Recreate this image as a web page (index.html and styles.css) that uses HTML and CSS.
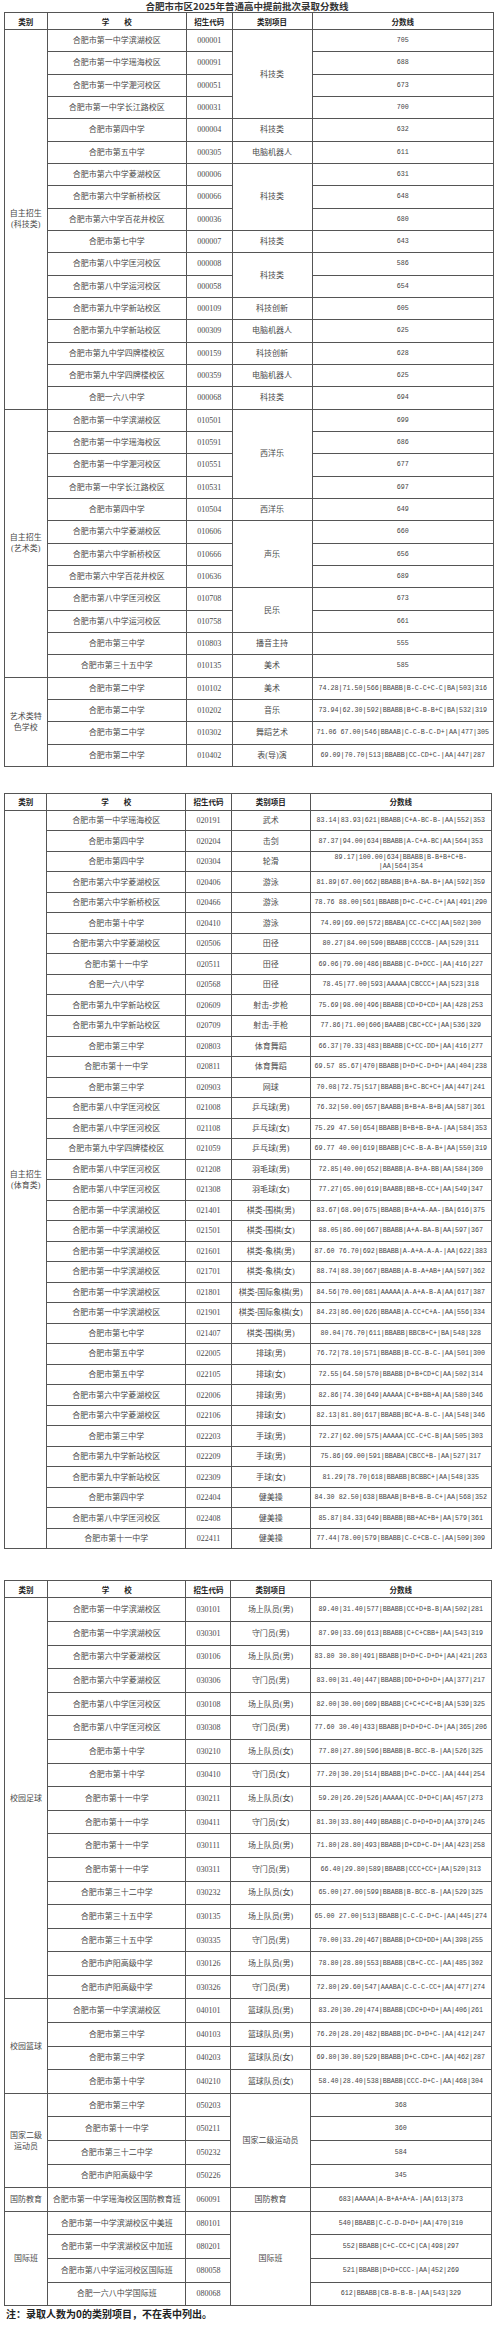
FILE: index.html
```html
<!DOCTYPE html>
<html lang="zh">
<head>
<meta charset="utf-8">
<title>合肥市市区2025年普通高中提前批次录取分数线</title>
<link rel="stylesheet" href="styles.css">
</head>
<body>
<h1 class="title">合肥市市区2025年普通高中提前批次录取分数线</h1>

<table class="t t1">
<colgroup><col class="c1"><col class="c2"><col class="c3"><col class="c4"><col class="c5"></colgroup>
<thead><tr class="hd"><th>类别</th><th>学　　校</th><th>招生代码</th><th>类别项目</th><th>分数线</th></tr></thead>
<tbody>
<tr><td class="cat" rowspan="17">自主招生<br>(科技类)</td><td>合肥市第一中学滨湖校区</td><td>000001</td><td rowspan="4">科技类</td><td>705</td></tr>
<tr><td>合肥市第一中学瑶海校区</td><td>000091</td><td>688</td></tr>
<tr><td>合肥市第一中学淝河校区</td><td>000051</td><td>673</td></tr>
<tr><td>合肥市第一中学长江路校区</td><td>000031</td><td>700</td></tr>
<tr><td>合肥市第四中学</td><td>000004</td><td>科技类</td><td>632</td></tr>
<tr><td>合肥市第五中学</td><td>000305</td><td>电脑机器人</td><td>611</td></tr>
<tr><td>合肥市第六中学菱湖校区</td><td>000006</td><td rowspan="3">科技类</td><td>631</td></tr>
<tr><td>合肥市第六中学新桥校区</td><td>000066</td><td>648</td></tr>
<tr><td>合肥市第六中学百花井校区</td><td>000036</td><td>680</td></tr>
<tr><td>合肥市第七中学</td><td>000007</td><td>科技类</td><td>643</td></tr>
<tr><td>合肥市第八中学匡河校区</td><td>000008</td><td rowspan="2">科技类</td><td>586</td></tr>
<tr><td>合肥市第八中学运河校区</td><td>000058</td><td>654</td></tr>
<tr><td>合肥市第九中学新站校区</td><td>000109</td><td>科技创新</td><td>605</td></tr>
<tr><td>合肥市第九中学新站校区</td><td>000309</td><td>电脑机器人</td><td>625</td></tr>
<tr><td>合肥市第九中学四牌楼校区</td><td>000159</td><td>科技创新</td><td>628</td></tr>
<tr><td>合肥市第九中学四牌楼校区</td><td>000359</td><td>电脑机器人</td><td>625</td></tr>
<tr><td>合肥一六八中学</td><td>000068</td><td>科技类</td><td>694</td></tr>

<tr><td class="cat" rowspan="12">自主招生<br>(艺术类)</td><td>合肥市第一中学滨湖校区</td><td>010501</td><td rowspan="4">西洋乐</td><td>699</td></tr>
<tr><td>合肥市第一中学瑶海校区</td><td>010591</td><td>686</td></tr>
<tr><td>合肥市第一中学淝河校区</td><td>010551</td><td>677</td></tr>
<tr><td>合肥市第一中学长江路校区</td><td>010531</td><td>697</td></tr>
<tr><td>合肥市第四中学</td><td>010504</td><td>西洋乐</td><td>649</td></tr>
<tr><td>合肥市第六中学菱湖校区</td><td>010606</td><td rowspan="3">声乐</td><td>660</td></tr>
<tr><td>合肥市第六中学新桥校区</td><td>010666</td><td>656</td></tr>
<tr><td>合肥市第六中学百花井校区</td><td>010636</td><td>689</td></tr>
<tr><td>合肥市第八中学匡河校区</td><td>010708</td><td rowspan="2">民乐</td><td>673</td></tr>
<tr><td>合肥市第八中学运河校区</td><td>010758</td><td>661</td></tr>
<tr><td>合肥市第三中学</td><td>010803</td><td>播音主持</td><td>555</td></tr>
<tr><td>合肥市第三十五中学</td><td>010135</td><td>美术</td><td>585</td></tr>

<tr><td class="cat" rowspan="4">艺术类特<br>色学校</td><td>合肥市第二中学</td><td>010102</td><td>美术</td><td>74.28|71.50|566|BBABB|B-C-C+C-C|BA|503|316</td></tr>
<tr><td>合肥市第二中学</td><td>010202</td><td>音乐</td><td>73.94|62.30|592|BBABB|B+C-B-B+C|BA|532|319</td></tr>
<tr><td>合肥市第二中学</td><td>010302</td><td>舞蹈艺术</td><td>71.06 67.00|546|BBAAB|C-C-B-C-D+|AA|477|305</td></tr>
<tr><td>合肥市第二中学</td><td>010402</td><td>表(导)演</td><td>69.09|70.70|513|BBABB|CC-CD+C-|AA|447|287</td></tr>
</tbody>
</table>

<table class="t t2">
<colgroup><col class="c1"><col class="c2"><col class="c3"><col class="c4"><col class="c5"></colgroup>
<thead><tr class="hd"><th>类别</th><th>学　　校</th><th>招生代码</th><th>类别项目</th><th>分数线</th></tr></thead>
<tbody>
<tr><td class="cat" rowspan="36">自主招生<br>(体育类)</td><td>合肥市第一中学瑶海校区</td><td>020191</td><td>武术</td><td>83.14|83.93|621|BBABB|C+A-BC-B-|AA|552|353</td></tr>
<tr><td>合肥市第四中学</td><td>020204</td><td>击剑</td><td>87.37|94.00|634|BBABB|A-C+A-BC|AA|564|353</td></tr>
<tr><td>合肥市第四中学</td><td>020304</td><td>轮滑</td><td class="wrap">89.17|100.00|634|BBABB|B-B+B+C+B-<br>|AA|564|354</td></tr>
<tr><td>合肥市第六中学菱湖校区</td><td>020406</td><td>游泳</td><td>81.89|67.00|662|BBABB|B+A-BA-B+|AA|592|359</td></tr>
<tr><td>合肥市第六中学新桥校区</td><td>020466</td><td>游泳</td><td>78.76 88.00|561|BBABB|D+C-C+C-C+|AA|491|290</td></tr>
<tr><td>合肥市第十中学</td><td>020410</td><td>游泳</td><td>74.09|69.00|572|BBABA|CC-C+CC|AA|502|300</td></tr>
<tr><td>合肥市第六中学菱湖校区</td><td>020506</td><td>田径</td><td>80.27|84.00|590|BBABB|CCCCB-|AA|520|311</td></tr>
<tr><td>合肥市第十一中学</td><td>020511</td><td>田径</td><td>69.06|79.00|486|BBABB|C-D+DCC-|AA|416|227</td></tr>
<tr><td>合肥一六八中学</td><td>020568</td><td>田径</td><td>78.45|77.00|593|AAAAA|CBCCC+|AA|523|318</td></tr>
<tr><td>合肥市第九中学新站校区</td><td>020609</td><td>射击-步枪</td><td>75.69|98.00|496|BBABB|CD+D+CD+|AA|428|253</td></tr>
<tr><td>合肥市第九中学新站校区</td><td>020709</td><td>射击-手枪</td><td>77.86|71.00|606|BAABB|CBC+CC+|AA|536|329</td></tr>
<tr><td>合肥市第三中学</td><td>020803</td><td>体育舞蹈</td><td>66.37|70.33|483|BBABB|C+CC-DD+|AA|416|277</td></tr>
<tr><td>合肥市第十一中学</td><td>020811</td><td>体育舞蹈</td><td>69.57 85.67|470|BBABB|D+D+C-D+D+|AA|404|238</td></tr>
<tr><td>合肥市第三中学</td><td>020903</td><td>网球</td><td>70.08|72.75|517|BBABB|B+C-BC+C+|AA|447|241</td></tr>
<tr><td>合肥市第八中学匡河校区</td><td>021008</td><td>乒乓球(男)</td><td>76.32|50.00|657|BAABB|B+B+A-B+B|AA|587|361</td></tr>
<tr><td>合肥市第八中学匡河校区</td><td>021108</td><td>乒乓球(女)</td><td>75.29 47.50|654|BBABB|B+B+B-B+A-|AA|584|353</td></tr>
<tr><td>合肥市第九中学四牌楼校区</td><td>021059</td><td>乒乓球(男)</td><td>69.77 40.00|619|BBABB|C+C-B-A-B+|AA|550|319</td></tr>
<tr><td>合肥市第八中学匡河校区</td><td>021208</td><td>羽毛球(男)</td><td>72.85|40.00|652|BBABB|A-B+A-BB|AA|584|360</td></tr>
<tr><td>合肥市第八中学匡河校区</td><td>021308</td><td>羽毛球(女)</td><td>77.27|65.00|619|BAABB|BB+B-CC+|AA|549|347</td></tr>
<tr><td>合肥市第一中学滨湖校区</td><td>021401</td><td>棋类-围棋(男)</td><td>83.67|68.90|675|BBABB|B+A+A-AA-|BA|616|375</td></tr>
<tr><td>合肥市第一中学滨湖校区</td><td>021501</td><td>棋类-围棋(女)</td><td>88.05|86.00|667|BBABB|A+A-BA-B|AA|597|367</td></tr>
<tr><td>合肥市第一中学滨湖校区</td><td>021601</td><td>棋类-象棋(男)</td><td>87.60 76.70|692|BBABB|A-A+A-A-A-|AA|622|383</td></tr>
<tr><td>合肥市第一中学滨湖校区</td><td>021701</td><td>棋类-象棋(女)</td><td>88.74|88.30|667|BBABB|A-B-A+AB+|AA|597|362</td></tr>
<tr><td>合肥市第一中学滨湖校区</td><td>021801</td><td>棋类-国际象棋(男)</td><td>84.56|70.00|681|AAAAA|A-A+A-B-A|AA|617|387</td></tr>
<tr><td>合肥市第一中学滨湖校区</td><td>021901</td><td>棋类-国际象棋(女)</td><td>84.23|86.00|626|BBAAB|A-CC+C+A-|AA|556|334</td></tr>
<tr><td>合肥市第七中学</td><td>021407</td><td>棋类-围棋(男)</td><td>80.04|76.70|611|BBABB|BBCB+C+|BA|548|328</td></tr>
<tr><td>合肥市第五中学</td><td>022005</td><td>排球(男)</td><td>76.72|78.10|571|BBABB|B-CC-B-C-|AA|501|300</td></tr>
<tr><td>合肥市第五中学</td><td>022105</td><td>排球(女)</td><td>72.55|64.50|570|BBABB|D+B+CD+C|AA|502|314</td></tr>
<tr><td>合肥市第六中学菱湖校区</td><td>022006</td><td>排球(男)</td><td>82.86|74.30|649|AAAAA|C+B+BB+A|AA|580|346</td></tr>
<tr><td>合肥市第六中学菱湖校区</td><td>022106</td><td>排球(女)</td><td>82.13|81.80|617|BBABB|BC+A-B-C-|AA|548|346</td></tr>
<tr><td>合肥市第三中学</td><td>022203</td><td>手球(男)</td><td>72.27|62.00|575|AAAAA|CC-C+C-B|AA|505|303</td></tr>
<tr><td>合肥市第九中学新站校区</td><td>022209</td><td>手球(男)</td><td>75.86|69.00|591|BBABA|CBCC+B-|AA|527|317</td></tr>
<tr><td>合肥市第九中学新站校区</td><td>022309</td><td>手球(女)</td><td>81.29|78.70|618|BBABB|BCBBC+|AA|548|335</td></tr>
<tr><td>合肥市第四中学</td><td>022404</td><td>健美操</td><td>84.30 82.50|638|BBAAB|B+B+B-B-C+|AA|568|352</td></tr>
<tr><td>合肥市第八中学匡河校区</td><td>022408</td><td>健美操</td><td>85.87|84.33|649|BBABB|BB+AC+B+|AA|579|361</td></tr>
<tr><td>合肥市第十一中学</td><td>022411</td><td>健美操</td><td>77.44|78.00|579|BBABB|C-C+CB-C-|AA|509|309</td></tr>
</tbody>
</table>

<table class="t t3">
<colgroup><col class="c1"><col class="c2"><col class="c3"><col class="c4"><col class="c5"></colgroup>
<thead><tr class="hd"><th>类别</th><th>学　　校</th><th>招生代码</th><th>类别项目</th><th>分数线</th></tr></thead>
<tbody>
<tr><td class="cat" rowspan="17">校园足球</td><td>合肥市第一中学滨湖校区</td><td>030101</td><td>场上队员(男)</td><td>89.40|31.40|577|BBABB|CC+D+B-B|AA|502|281</td></tr>
<tr><td>合肥市第一中学滨湖校区</td><td>030301</td><td>守门员(男)</td><td>87.90|33.60|613|BBABB|C+C+CBB+|AA|543|319</td></tr>
<tr><td>合肥市第六中学菱湖校区</td><td>030106</td><td>场上队员(男)</td><td>83.80 30.80|491|BBABB|D+D+C-D+D+|AA|421|263</td></tr>
<tr><td>合肥市第六中学菱湖校区</td><td>030306</td><td>守门员(男)</td><td>83.00|31.40|447|BBABB|DD+D+D+D+|AA|377|217</td></tr>
<tr><td>合肥市第八中学匡河校区</td><td>030108</td><td>场上队员(男)</td><td>82.00|30.00|609|BBABB|C+C+C+C+B|AA|539|325</td></tr>
<tr><td>合肥市第八中学匡河校区</td><td>030308</td><td>守门员(男)</td><td>77.60 30.40|433|BBABB|D+D+D+C-D+|AA|365|206</td></tr>
<tr><td>合肥市第十中学</td><td>030210</td><td>场上队员(女)</td><td>77.80|27.80|596|BBABB|B-BCC-B-|AA|526|325</td></tr>
<tr><td>合肥市第十中学</td><td>030410</td><td>守门员(女)</td><td>77.20|30.20|514|BBABB|D+C-D+CC-|AA|444|254</td></tr>
<tr><td>合肥市第十一中学</td><td>030211</td><td>场上队员(女)</td><td>59.20|26.20|526|AAAAA|CC-D+D+C|AA|457|273</td></tr>
<tr><td>合肥市第十一中学</td><td>030411</td><td>守门员(女)</td><td>81.30|33.80|449|BBABB|C-D+D+D+D|AA|379|245</td></tr>
<tr><td>合肥市第十一中学</td><td>030111</td><td>场上队员(男)</td><td>71.80|28.80|493|BBABB|D+CD+C-D+|AA|423|258</td></tr>
<tr><td>合肥市第十一中学</td><td>030311</td><td>守门员(男)</td><td>66.40|29.80|589|BBABB|CCC+CC+|AA|520|313</td></tr>
<tr><td>合肥市第三十二中学</td><td>030232</td><td>场上队员(女)</td><td>65.00|27.00|599|BBABB|B-BCC-B-|AA|529|325</td></tr>
<tr><td>合肥市第三十五中学</td><td>030135</td><td>场上队员(男)</td><td>65.00 27.00|513|BBABB|C-C-C-D+C-|AA|445|274</td></tr>
<tr><td>合肥市第三十五中学</td><td>030335</td><td>守门员(男)</td><td>70.00|33.20|467|BBABB|D+CD+DD+|AA|398|255</td></tr>
<tr><td>合肥市庐阳高级中学</td><td>030126</td><td>场上队员(男)</td><td>78.80|28.80|553|BBABB|CB+C-CC-|AA|485|302</td></tr>
<tr><td>合肥市庐阳高级中学</td><td>030326</td><td>守门员(男)</td><td>72.80|29.60|547|AAABA|C-C-C-CC+|AA|477|274</td></tr>

<tr><td class="cat" rowspan="4">校园篮球</td><td>合肥市第一中学滨湖校区</td><td>040101</td><td>篮球队员(男)</td><td>83.20|30.20|474|BBABB|CDC+D+D+|AA|406|261</td></tr>
<tr><td>合肥市第三中学</td><td>040103</td><td>篮球队员(男)</td><td>76.20|28.20|482|BBABB|DC-D+D+C-|AA|412|247</td></tr>
<tr><td>合肥市第三中学</td><td>040203</td><td>篮球队员(女)</td><td>69.80|30.80|529|BBABB|D+C-CD+C-|AA|462|287</td></tr>
<tr><td>合肥市第十中学</td><td>040210</td><td>篮球队员(女)</td><td>58.40|28.40|538|BBABB|CCC-D+C-|AA|468|304</td></tr>

<tr><td class="cat" rowspan="4">国家二级<br>运动员</td><td>合肥市第三中学</td><td>050203</td><td rowspan="4">国家二级运动员</td><td>368</td></tr>
<tr><td>合肥市第十一中学</td><td>050211</td><td>360</td></tr>
<tr><td>合肥市第三十二中学</td><td>050232</td><td>584</td></tr>
<tr><td>合肥市庐阳高级中学</td><td>050226</td><td>345</td></tr>

<tr><td class="cat">国防教育</td><td>合肥市第一中学瑶海校区国防教育班</td><td>060091</td><td>国防教育</td><td>683|AAAAA|A-B+A+A+A-|AA|613|373</td></tr>

<tr><td class="cat" rowspan="4">国际班</td><td>合肥市第一中学滨湖校区中美班</td><td>080101</td><td rowspan="4">国际班</td><td>540|BBABB|C-C-D-D+D+|AA|470|310</td></tr>
<tr><td>合肥市第一中学滨湖校区中加班</td><td>080201</td><td>552|BBABB|C+C-CC+C|CA|498|297</td></tr>
<tr><td>合肥市第八中学运河校区国际班</td><td>080058</td><td>521|BBABB|D+D+CCC-|AA|452|269</td></tr>
<tr><td>合肥一六八中学国际班</td><td>080068</td><td>612|BBABB|CB-B-B-B-|AA|543|329</td></tr>
</tbody>
</table>

<p class="note">注：录取人数为0的类别项目，不在表中列出。</p>
</body>
</html>
```

FILE: styles.css
```css
html, body {
  margin: 0;
  padding: 0;
  background: #ffffff;
}

body {
  width: 500px;
  font-family: "Liberation Serif", "Noto Sans CJK SC", serif;
  color: #4a4a4a;
}

.title {
  margin: 0;
  height: 12px;
  font-family: "Noto Sans CJK SC", sans-serif;
  font-weight: bold;
  font-size: 9.5px;
  line-height: 13px;
  color: #333333;
  text-align: center;
  padding-right: 6px;
}

.t {
  border-collapse: collapse;
  table-layout: fixed;
  margin-left: 4px;
}

.t th,
.t td {
  border: 1px solid #555555;
  padding: 0 2px;
  text-align: center;
  vertical-align: middle;
  font-size: 8px;
  line-height: 9px;
  white-space: nowrap;
  overflow: hidden;
}

/* score column: half-width monospaced digits like the printed original */
.t td:last-child {
  font-family: "Liberation Mono", "Noto Sans CJK SC", monospace;
  font-size: 6.7px;
  line-height: 9px;
  color: #444444;
}

.t th {
  font-family: "Noto Sans CJK SC", sans-serif;
  font-weight: bold;
  font-size: 7.5px;
  color: #222222;
}

.t .cat {
  white-space: normal;
  padding: 0 3px;
  line-height: 11px;
}

.t .wrap {
  white-space: normal;
}

.hd {
  height: 17px;
}

/* table 1 */
.t1 {
  width: 489px;
}
.t1 .c1 { width: 42.5px; }
.t1 .c2 { width: 139.5px; }
.t1 .c3 { width: 45.5px; }
.t1 .c4 { width: 80px; }
.t1 .c5 { width: 181.5px; }
.t1 tbody tr { height: 22.33px; }

/* table 2 */
.t2 {
  width: 487px;
  margin-top: 26px;
}
.t2 .c1 { width: 42.3px; }
.t2 .c2 { width: 139px; }
.t2 .c3 { width: 45.4px; }
.t2 .c4 { width: 79px; }
.t2 .c5 { width: 181.3px; }
.t2 tbody tr { height: 20.53px; }

/* table 3 */
.t3 {
  width: 487px;
  margin-top: 31px;
}
.t3 .c1 { width: 43px; }
.t3 .c2 { width: 138.4px; }
.t3 .c3 { width: 45px; }
.t3 .c4 { width: 79.3px; }
.t3 .c5 { width: 181.3px; }
.t3 tbody tr { height: 23.6px; }

.note {
  margin: 2px 0 0 6px;
  font-family: "Noto Sans CJK SC", sans-serif;
  font-weight: bold;
  font-size: 10px;
  line-height: 12px;
  color: #222222;
}
```
